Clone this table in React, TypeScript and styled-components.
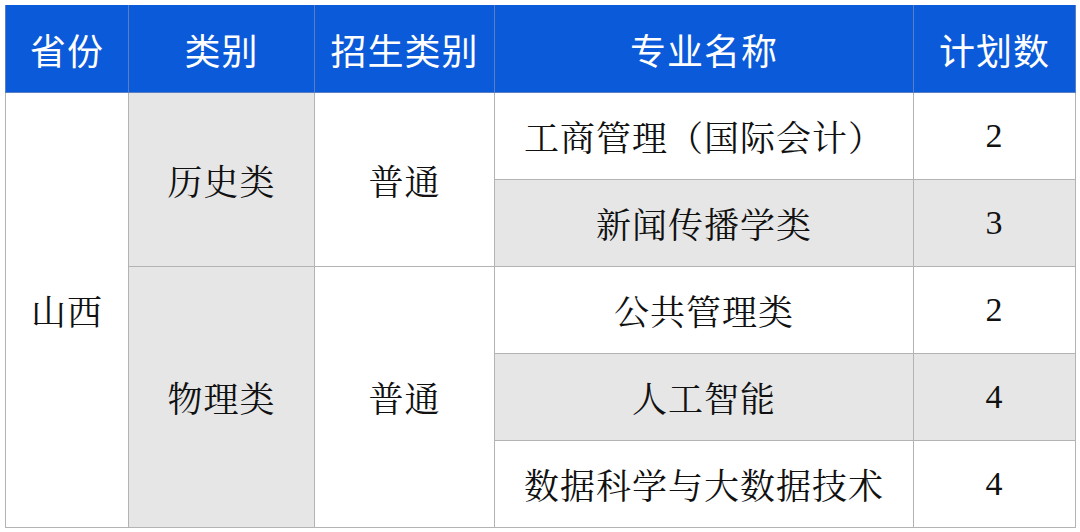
import React from "react";
import styled, { createGlobalStyle } from "styled-components";

const Global = createGlobalStyle`
  html, body { margin: 0; padding: 0; background: #ffffff; }
  body { width: 1080px; height: 532px; overflow: hidden; }
`;

const Wrap = styled.div`
  padding: 5px 0 0 5px;
`;

const Table = styled.table`
  border-collapse: collapse;
  table-layout: fixed;
  width: 1070px;
`;

const HeadCell = styled.th<{ $w: number }>`
  width: ${(p) => p.$w}px;
  height: 87px;
  padding: 0;
  background: #0b5ad9;
  color: #ffffff;
  font-family: "Noto Sans CJK SC", "Noto Sans", sans-serif;
  font-weight: 400;
  font-size: 36px;
  text-align: center;
  vertical-align: middle;
  border: 1px solid #5a7fc0;
  border-top: none;
  letter-spacing: 1px;
`;

const Cell = styled.td<{ $grey?: boolean; $num?: boolean }>`
  height: 86px;
  padding: 0;
  background: ${(p) => (p.$grey ? "#e6e6e6" : "#ffffff")};
  color: #111111;
  font-family: ${(p) =>
    p.$num
      ? '"Liberation Serif", serif'
      : '"Noto Serif CJK SC", "Noto Serif SC", "Noto Sans CJK SC", serif'};
  font-weight: 400;
  font-size: ${(p) => (p.$num ? "34px" : "35px")};
  text-align: center;
  vertical-align: middle;
  border: 1px solid #b3b3b3;
  letter-spacing: 1px;
`;

const heads: [string, number][] = [
  ["省份", 122],
  ["类别", 185],
  ["招生类别", 179],
  ["专业名称", 418],
  ["计划数", 161],
];

type Major = { name: string; n: string; grey: boolean };

const groups: { cat: string; type: string; majors: Major[] }[] = [
  {
    cat: "历史类",
    type: "普通",
    majors: [
      { name: "工商管理（国际会计）", n: "2", grey: false },
      { name: "新闻传播学类", n: "3", grey: true },
    ],
  },
  {
    cat: "物理类",
    type: "普通",
    majors: [
      { name: "公共管理类", n: "2", grey: false },
      { name: "人工智能", n: "4", grey: true },
      { name: "数据科学与大数据技术", n: "4", grey: false },
    ],
  },
];

const total = groups.reduce((s, g) => s + g.majors.length, 0);

export default function App() {
  return (
    <>
      <Global />
      <Wrap>
        <Table>
          <thead>
            <tr>
              {heads.map(([t, w]) => (
                <HeadCell key={t} $w={w}>
                  {t}
                </HeadCell>
              ))}
            </tr>
          </thead>
          <tbody>
            {groups.map((g, gi) =>
              g.majors.map((m, mi) => (
                <tr key={`${gi}-${mi}`}>
                  {gi === 0 && mi === 0 && <Cell rowSpan={total}>山西</Cell>}
                  {mi === 0 && (
                    <Cell rowSpan={g.majors.length} $grey>
                      {g.cat}
                    </Cell>
                  )}
                  {mi === 0 && <Cell rowSpan={g.majors.length}>{g.type}</Cell>}
                  <Cell $grey={m.grey}>{m.name}</Cell>
                  <Cell $grey={m.grey} $num>
                    {m.n}
                  </Cell>
                </tr>
              ))
            )}
          </tbody>
        </Table>
      </Wrap>
    </>
  );
}
